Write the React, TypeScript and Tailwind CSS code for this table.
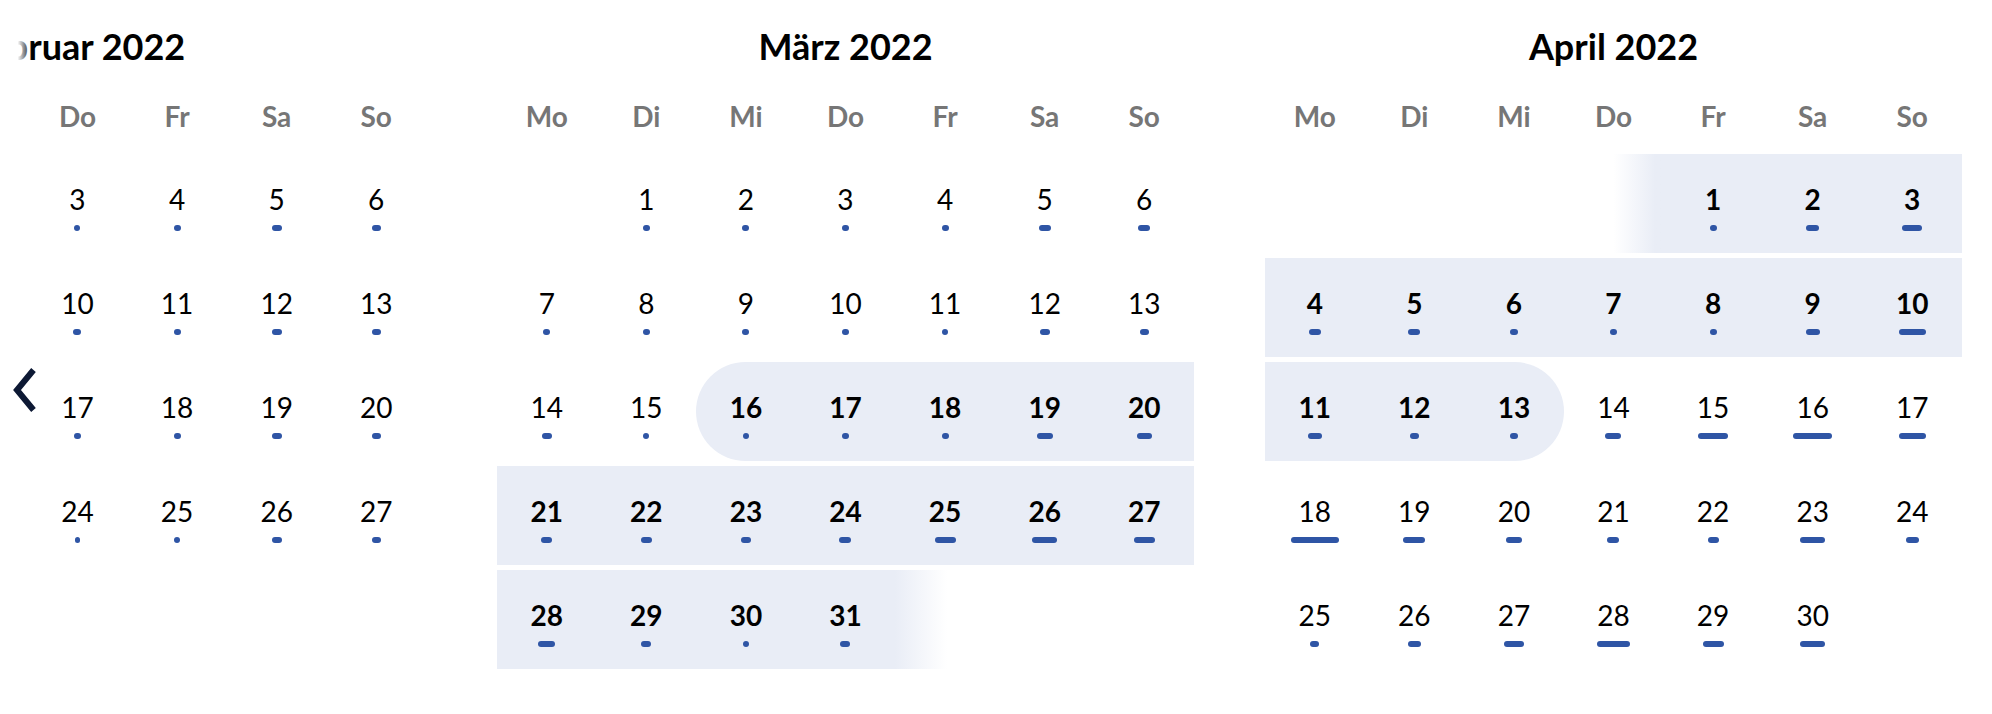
import type { FC } from "react";

type Day = { d: number; w: number } | null;
type Band = "" | "full" | "roundL" | "roundR" | "fadeIn" | "fadeOut";

const weekdays = ["Mo", "Di", "Mi", "Do", "Fr", "Sa", "So"];

// dot widths per day (px), index = day - 1
const febDots = [7, 7, 6, 7, 10, 9, 7, 7, 7, 8, 7, 10, 9, 7, 7, 7, 7, 7, 10, 9, 7, 7, 7, 5, 6, 10, 9, 7];
const marDots = [7, 7, 7, 7, 12, 12, 7, 7, 7, 7, 6, 10, 9, 10, 6, 6, 7, 7, 16, 15, 11, 11, 10, 12, 21, 25, 21, 17, 10, 6, 10];
const aprDots = [7, 13, 20, 12, 12, 8, 7, 7, 14, 27, 14, 9, 8, 16, 30, 39, 27, 48, 22, 16, 12, 11, 25, 13, 9, 13, 20, 33, 21, 25];

const buildWeeks = (offset: number, dots: number[]): Day[][] => {
  const cells: Day[] = [];
  for (let i = 0; i < offset; i++) cells.push(null);
  dots.forEach((w, i) => cells.push({ d: i + 1, w }));
  while (cells.length % 7 !== 0) cells.push(null);
  const weeks: Day[][] = [];
  for (let i = 0; i < cells.length; i += 7) weeks.push(cells.slice(i, i + 7));
  return weeks;
};

const months = [
  { title: "Februar 2022", key: 2, weeks: buildWeeks(1, febDots) },
  { title: "März 2022", key: 3, weeks: buildWeeks(1, marDots) },
  { title: "April 2022", key: 4, weeks: buildWeeks(4, aprDots) },
];

// selected range: 16. März – 13. April
const inRange = (m: number, d: number) => (m === 3 && d >= 16) || (m === 4 && d <= 13);

const bandFor = (m: number, week: Day[], i: number): Band => {
  const c = week[i];
  if (c) {
    if (m === 3 && c.d === 16) return "roundL";
    if (m === 4 && c.d === 13) return "roundR";
    return inRange(m, c.d) ? "full" : "";
  }
  const next = week[i + 1];
  const prev = week[i - 1];
  if (m === 4 && next && next.d === 1) return "fadeIn";
  if (m === 3 && prev && prev.d === 31) return "fadeOut";
  return "";
};

const bandClass: Record<Band, string> = {
  "": "",
  full: "bg-[#e9edf6]",
  roundL: "bg-[#e9edf6] rounded-l-full",
  roundR: "bg-[#e9edf6] rounded-r-full",
  fadeIn: "bg-linear-to-r from-transparent from-50% to-[#e9edf6] to-92%",
  fadeOut: "bg-linear-to-r from-[#e9edf6] to-transparent to-52%",
};

const Month: FC<{ title: string; m: number; weeks: Day[][] }> = ({ title, m, weeks }) => (
  <div className="w-[697px] shrink-0 flex flex-col pt-[24px]">
    <h2 className="h-[44px] leading-[44px] text-center text-[36px] font-bold text-black">{title}</h2>
    <div className="grid grid-cols-7 mt-[28px]">
      {weekdays.map((w) => (
        <div key={w} className="h-[40px] leading-[40px] text-center text-[28px] font-bold text-[#767676]">
          {w}
        </div>
      ))}
    </div>
    <div className="flex flex-col gap-[5px] mt-[18px]">
      {weeks.map((week, wi) => (
        <div key={wi} className="grid grid-cols-7 h-[99px]">
          {week.map((c, i) => (
            <div key={i} className={`flex flex-col items-center pt-[29px] ${bandClass[bandFor(m, week, i)]}`}>
              {c && (
                <>
                  <span
                    className={`h-[32px] leading-[32px] text-[28px] text-black ${
                      inRange(m, c.d) ? "font-bold" : "font-normal"
                    }`}
                  >
                    {c.d}
                  </span>
                  <span className="mt-[10px] h-[6px] rounded-full bg-[#2f55a5]" style={{ width: c.w }} />
                </>
              )}
            </div>
          ))}
        </div>
      ))}
    </div>
  </div>
);

const App: FC = () => {
  return (
    <div className="relative w-[1992px] h-[714px] overflow-hidden bg-white font-[Lato,sans-serif]">
      <div className="flex gap-[71px] -ml-[271px]">
        {months.map((mo) => (
          <Month key={mo.key} title={mo.title} m={mo.key} weeks={mo.weeks} />
        ))}
      </div>

      {/* left edge fade */}
      <div className="absolute left-0 top-0 h-full w-[32px] bg-linear-to-r from-white from-55% to-transparent pointer-events-none" />

      <button className="absolute left-[10px] top-[366px] w-[28px] h-[48px]" aria-label="Vorheriger Monat">
        <svg width="28" height="48" viewBox="0 0 28 48" fill="none">
          <polyline points="23.5,4 7,24 23.5,44" stroke="#0d1934" strokeWidth="6" strokeLinejoin="miter" />
        </svg>
      </button>
    </div>
  );
};

export default App;
